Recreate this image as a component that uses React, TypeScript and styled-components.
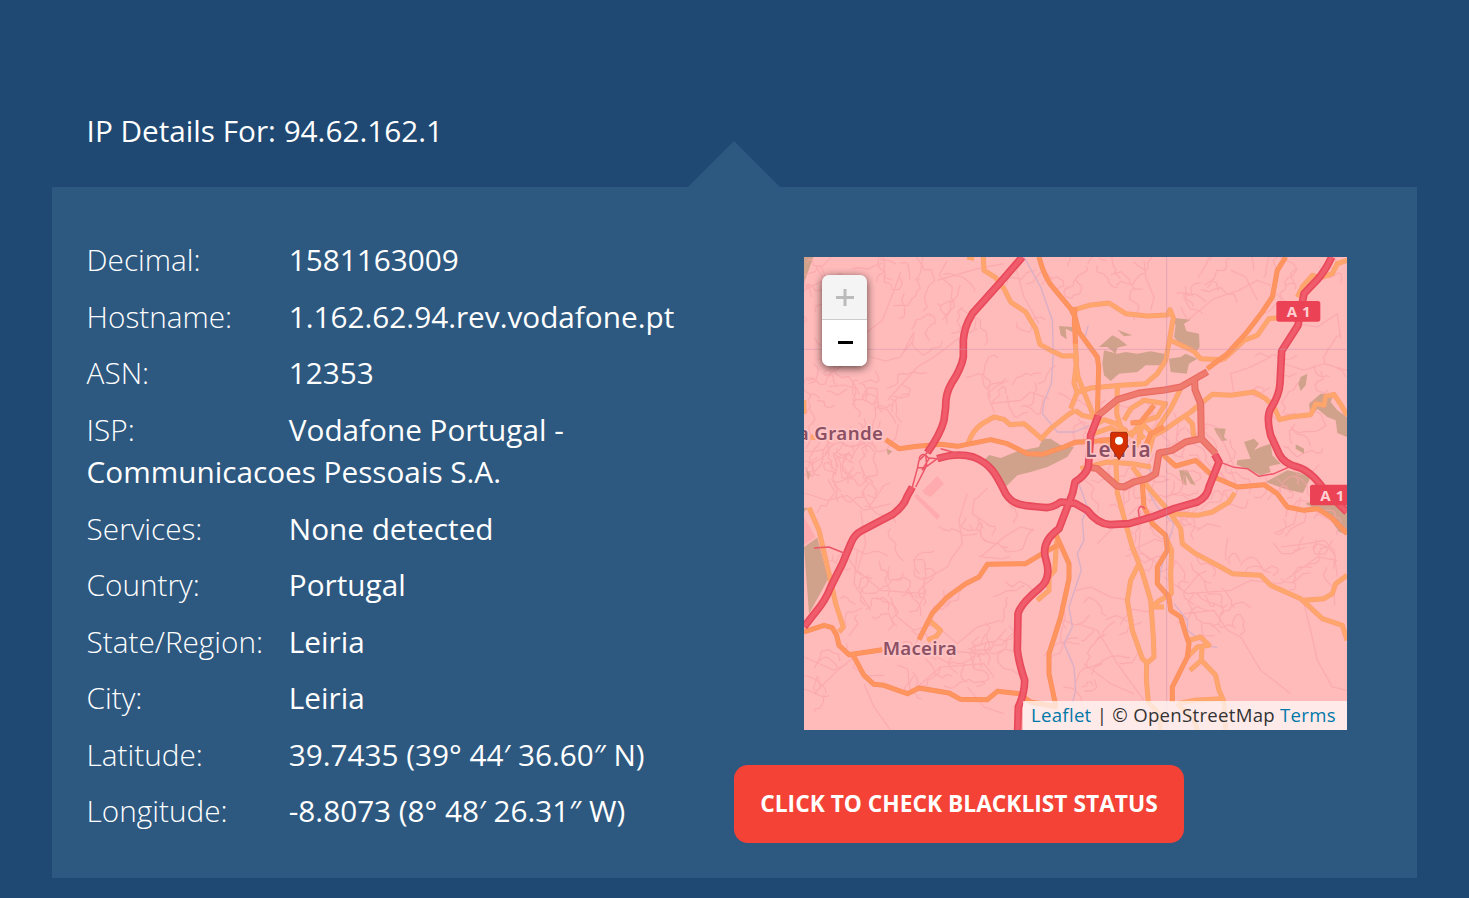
import React from "react";
import styled, { createGlobalStyle } from "styled-components";

const GlobalStyle = createGlobalStyle`
  html, body { margin: 0; padding: 0; }
  body {
    background: #1f4872;
    color: #fff;
    font-family: "Open Sans", "Noto Sans", sans-serif;
    font-size: 30px;
    line-height: 42.4px;
    overflow: hidden;
  }
`;

const Page = styled.main`
  box-sizing: border-box;
  height: 898px;
  padding: 110px 52px 0;
`;

const Heading = styled.h1`
  margin: 0;
  padding: 0 34.6px;
  height: 77px;
  font-size: 29.72px;
  font-weight: 400;
  line-height: 42px;
`;

const Panel = styled.section`
  position: relative;
  box-sizing: border-box;
  display: grid;
  grid-template-columns: 682px 1fr;
  height: 691px;
  background: #2d587f;

  &::before {
    content: "";
    position: absolute;
    left: 636px;
    top: -46px;
    border: 46px solid transparent;
    border-top-width: 0;
    border-bottom-color: #2d587f;
  }
`;

const Details = styled.div`
  display: flex;
  flex-direction: column;
  gap: 14.15px;
  padding: 52px 34.6px 0;
`;

const Row = styled.div`
  font-size: 29.72px;
`;

const Label = styled.span`
  display: inline-block;
  width: 202.2px;
  font-weight: 300;
`;

const Side = styled.div`
  display: flex;
  flex-direction: column;
  align-items: flex-start;
  gap: 35px;
  padding-top: 70px;
`;

const MapBox = styled.div`
  position: relative;
  width: 543px;
  height: 473px;
  margin-left: 70px;
  overflow: hidden;
  background: #ffbaba;
`;

const MapDrawing = styled.svg`
  display: block;
  width: 543px;
  height: 473px;
`;

const ZoomControl = styled.div`
  position: absolute;
  left: 18px;
  top: 18px;
  width: 45px;
  border-radius: 7px;
  overflow: hidden;
  box-shadow: 0 2px 9px rgba(0, 0, 0, 0.65);
`;

const ZoomButton = styled.button<{ $off?: boolean }>`
  display: flex;
  align-items: center;
  justify-content: center;
  box-sizing: border-box;
  width: 45px;
  height: ${(p) => (p.$off ? 45 : 46)}px;
  padding: ${(p) => (p.$off ? "0 0 0 1px" : "0 0 2px 2px")};
  border: 0;
  border-bottom: ${(p) => (p.$off ? "1px solid #ccc" : "0")};
  background: ${(p) => (p.$off ? "#f4f4f4" : "#fff")};
`;

const Attribution = styled.div`
  position: absolute;
  right: 0;
  bottom: 0;
  box-sizing: border-box;
  width: 324px;
  height: 29px;
  padding: 0 8px;
  background: rgba(255, 255, 255, 0.7);
  color: #333;
  font-size: 18.6px;
  letter-spacing: 0.29px;
  line-height: 28px;
  white-space: nowrap;
`;

const MapLink = styled.a`
  color: #0078a8;
`;

const CheckButton = styled.button`
  width: 450px;
  height: 78px;
  padding: 0;
  border: 0;
  border-radius: 14px;
  background: #f44336;
  color: #fff;
  font: 700 22.76px/78px "Open Sans", sans-serif;
  white-space: nowrap;
`;

const details: [string, string][] = [
  ["Decimal:", "1581163009"],
  ["Hostname:", "1.162.62.94.rev.vodafone.pt"],
  ["ASN:", "12353"],
  ["ISP:", "Vodafone Portugal - Communicacoes Pessoais S.A."],
  ["Services:", "None detected"],
  ["Country:", "Portugal"],
  ["State/Region:", "Leiria"],
  ["City:", "Leiria"],
  ["Latitude:", "39.7435 (39° 44′ 36.60″ N)"],
  ["Longitude:", "-8.8073 (8° 48′ 26.31″ W)"],
];

// Small streets: short wandering lines seeded around the built-up areas.
function streets(): string {
  let s = 41;
  const rnd = () => {
    s = (s * 16807) % 2147483647;
    return s / 2147483647;
  };
  const areas = [
    [60, 130, 110, 120, 18], [80, 450, 100, 150, 30], [100, 640, 130, 80, 24],
    [310, 60, 110, 60, 12], [450, 190, 90, 70, 9], [230, 440, 70, 70, 12],
    [630, 430, 90, 60, 9], [250, 980, 150, 100, 24], [420, 1230, 150, 80, 18],
    [80, 1270, 80, 60, 9], [590, 850, 90, 60, 9], [990, 560, 170, 110, 28],
    [1060, 60, 200, 60, 15], [1450, 60, 140, 60, 9], [1500, 860, 110, 100, 15],
    [860, 1180, 90, 120, 18], [1190, 960, 90, 60, 9], [1100, 840, 140, 110, 16],
    [1290, 1080, 100, 60, 9], [1490, 390, 110, 120, 12], [1160, 700, 120, 80, 12],
    [500, 1100, 150, 130, 12], [740, 100, 120, 90, 8], [1330, 620, 160, 110, 12],
  ];
  let d = "";
  for (const [cx, cy, rx, ry, n] of areas) {
    for (let i = 0; i < n; i++) {
      let x = cx + (rnd() * 2 - 1) * rx;
      let y = cy + (rnd() * 2 - 1) * ry;
      let a = rnd() * 6.283;
      d += `M${x.toFixed(0)} ${y.toFixed(0)}`;
      const steps = 4 + Math.floor(rnd() * 5);
      for (let k = 0; k < steps; k++) {
        a += (rnd() - 0.5) * 2.6;
        const l = 8 + rnd() * 20;
        x += Math.cos(a) * l;
        y += Math.sin(a) * l;
        d += `L${x.toFixed(0)} ${y.toFixed(0)}`;
      }
    }
  }
  return d;
}

const streetPath = streets();

const lanes =
  "M0 100L60 70L120 95L175 110 M80 350L150 300L190 225L235 190L270 100L290 45 M200 300L245 312L290 300L330 225L326 255L295 290 M250 430L340 330L390 300L470 240L520 215 M430 10L405 55L445 90L438 160L415 190 M400 70L520 35L600 20 M550 410L580 385L615 370 M560 440L550 410 M560 440L650 430L680 405L735 425 M630 15L660 120L705 200 M1020 10L1025 60L1050 120L1040 160 M1130 150L1150 190L1175 170L1230 125L1305 100L1360 70L1400 85 M1360 130L1325 60L1280 40 M1400 300L1340 330L1280 350L1290 410 M1440 320L1500 340L1560 320L1629 340 M1480 200L1540 210L1600 170L1610 245 M1240 520L1270 580L1290 630 M0 708L70 730L130 715L180 760L260 740 M170 760L185 860L160 940L230 1000L360 1010L360 960 M490 710L465 790L475 860L445 900L430 930L360 970 M530 900L600 840L650 810L690 820 M260 1020L280 1080L330 1120L390 1100L460 1160L520 1110L590 1090 M160 880L150 980L200 1060 M340 1290L410 1230L540 1220L570 1260 M30 1310L90 1250L150 1200 M0 1200L90 1240L130 1220 M180 1280L210 1350L260 1419 M490 1290L540 1350L600 1370 M815 1000L860 990L920 1020L980 1030 M820 1100L880 1120L940 1220L1020 1330 M840 1220L920 1280L990 1310 M880 860L940 800L990 830 M1010 760L1005 880L1060 920 M1080 960L1150 1010L1280 1000L1340 970L1430 980L1540 900L1600 910 M1140 1070L1230 1060L1270 1120L1310 1140L1370 1240L1460 1310 M1500 1040L1520 1120L1540 1210L1585 1290L1629 1300 M1410 830L1470 800L1490 720 M1430 870L1510 860L1560 850L1590 880L1600 960 M1180 820L1210 800L1250 810";

const tertiary = [
  "M538 0L540 40L575 62L600 95L620 135L665 165L695 215L708 262L740 280L775 297L813 296",
  "M493 558Q505 520 535 500L570 480L600 487L618 503L660 500L690 525L712 545L740 515L790 475L813 460",
  "M813 158L855 145L915 138L965 170L1030 177L1090 174L1098 158L1108 182L1098 240L1085 310L1060 350L1025 380L950 385L860 393L813 408",
  "M1100 250L1170 283L1190 305L1258 308",
  "M1258 308L1320 250L1360 235L1395 185L1430 182",
  "M1190 440L1225 412L1280 415L1350 405L1385 425L1410 450L1427 488L1460 480L1520 473L1535 440L1560 445L1565 418L1590 412L1612 445L1629 475",
  "M813 296L822 360L850 430L870 480", "M813 460L835 475L880 485",
  "M813 250L818 310L810 380L820 405L800 455",
  "M1480 120L1495 90L1525 55L1550 62L1585 50L1600 20L1629 10",
  "M940 390L938 470L950 510L960 550",
  "M1130 395L1100 455L1070 500L1050 530L1030 600",
  "M960 490L980 455L1020 430L1085 440L1060 480L1010 495L980 540",
  "M1190 440L1160 465L1115 495L1080 520L1050 535L1015 500L1000 570",
  "M1145 480L1165 500L1170 545", "M880 500L900 488L935 500L965 520L950 570L890 560",
  "M870 530L920 512L960 535L1000 520L1020 545", "M830 635L910 615L985 620L1040 630",
  "M935 600L940 708L965 800L985 870L1013 940L1040 1030L1048 1140L1050 1200L1030 1218L1015 1205L985 1120L970 1030L980 970L1005 920",
  "M985 630L1040 700L1080 745L1100 770L1130 815L1135 860L1175 890L1250 930L1285 950L1370 955L1400 985L1490 1025L1555 1085L1615 1105L1629 1150",
  "M1500 1030L1560 1025L1585 1010L1595 980L1629 955",
  "M1100 770L1180 775L1225 765L1275 735L1292 708",
  "M1028 1210L1027 1270L1033 1335L1065 1370L1070 1419",
  "M1085 840L1103 880L1100 950L1102 1010L1060 1035L1045 1050L1080 1050",
  "M1155 1150L1190 1140L1215 1165L1180 1170L1150 1200",
  "M1194 1170L1192 1210L1158 1240 M1192 1210L1235 1255L1245 1300L1260 1335L1265 1419",
  "M1120 1340L1170 1330L1255 1325 M1120 1340L1170 1390L1180 1419",
  "M15 752L45 820L75 950L95 1040L118 1110L105 1125",
  "M378 1092L410 1120L398 1137L370 1150",
  "M758 850L752 940L735 960L735 1000L700 1030",
  "M0 430L0 470 M20 540L80 545 M490 0L510 4",
];

const secondary = [
  "M245 548L285 575L340 568L410 562L460 568L560 548L610 560L670 590L715 592L780 570L813 556L880 552L940 545",
  "M705 0Q722 65 750 95L800 155L813 180L825 225L880 300L884 330L880 480",
  "M813 150L811 200L815 260",
  "M1445 0L1420 40L1405 120L1375 165L1325 230L1270 290L1210 335",
  "M1065 580L1090 605L1115 627L1175 610L1230 660L1300 690L1380 683L1420 710L1450 750L1500 760L1540 755L1580 780L1629 830",
  "M0 1125L60 1105L85 1112L98 1135L105 1165L135 1193L235 1178 M145 1190L180 1255L210 1282L240 1285L310 1310L345 1293L435 1308L470 1327L550 1328L580 1303L645 1310L680 1335L760 1350",
  "M345 1148L385 1068L430 1020L485 980L525 960L550 922L665 920L715 890L760 865",
  "M750 820L795 920L795 965L770 1080L735 1190L735 1250L755 1345",
  "M1015 680L1020 750L1045 800L1085 835L1090 880L1060 930L1060 980L1095 1020L1100 1060L1130 1080L1145 1130L1155 1160L1150 1200L1125 1250L1105 1290L1105 1335",
  "M980 498L1010 495L1050 445 M1015 590L1040 530L1080 510",
];

const trunk =
  "M883 475L940 428L1005 408L1075 400L1130 390L1210 344 M1172 373L1173 398L1190 440L1192 545L1235 590 M1192 545L1145 555L1105 580L1065 588L1055 650L1030 665L990 675L960 690L940 688L880 635L850 630";

const motorway =
  "M655 0L590 75L505 170Q480 210 478 250L478 300Q472 335 442 380Q424 410 425 450L420 490Q410 530 370 587 M325 690L310 717Q300 748 265 773L175 820Q150 832 140 860L115 920L80 990Q65 1030 35 1065L0 1110 M400 605Q460 586 508 600C565 622 580 660 605 710C630 750 665 745 728 752Q750 750 770 735L813 739L850 760Q880 800 918 803L975 800L1050 778L1110 755L1180 735Q1210 720 1215 690L1245 615L1232 592 M883 475L860 535L853 630Q845 655 813 675L806 708L765 815Q710 855 725 905Q745 965 705 995Q650 1040 642 1070L640 1180Q645 1220 662 1270Q662 1310 643 1350L641 1419 M1583 0Q1565 40 1540 68L1500 110L1482 205L1433 282L1428 380Q1426 415 1400 455Q1386 480 1400 535L1425 590Q1440 620 1480 630Q1520 640 1562 700L1629 765";

const MapArt = () => (
  <MapDrawing viewBox="0 0 1629 1419" fill="none" strokeLinejoin="round" strokeLinecap="butt">
    <g fill="#d1a28b">
      <path d="M0 0H28L0 78Z M0 870L40 842L73 965L15 1070Z M0 752L12 752L0 765Z" />
      <path d="M540 610L555 594L590 603L640 583L705 570L715 545L740 545L770 565L810 570L790 600L730 630L680 645L640 655L605 690L580 650Z" />
      <path d="M900 280L940 290L965 285L1000 290L1040 283L1095 293L1075 325L1025 325L1000 345L945 350L920 372L900 355L895 320Z M925 235L945 245L970 265L940 272L935 290L910 270L885 270Z M940 218L985 235L960 238Z" />
      <path d="M1105 182L1160 188L1140 200L1147 222L1185 230L1187 270L1170 290L1135 270L1110 240L1115 205Z M1095 305L1130 300L1145 290L1180 305L1155 320L1148 350L1100 345Z" />
      <path d="M1230 513L1265 515L1260 540L1270 550L1253 553L1238 530Z M1320 555L1350 545L1365 560L1350 580L1370 570L1400 560L1405 595L1430 620L1395 628L1400 645L1370 655L1340 640L1298 623L1300 610L1340 605Z M1385 675L1450 640L1500 650L1520 660L1497 708L1450 698Z" />
      <path d="M1490 360L1510 350L1505 385L1490 402L1483 380Z M1515 440L1550 410L1590 410L1580 435L1600 460L1629 480V540L1600 528L1595 490L1570 480L1540 455L1520 480Z M1475 562L1500 575L1500 590L1475 575Z M1505 740L1530 730L1629 730V832L1605 825L1575 780Z" />
      <path d="M765 207L805 210V225L785 215L788 247L770 235Z M247 575L265 583L252 595Z M1125 640L1150 640L1175 685L1160 680L1145 655L1148 685L1135 680Z M5 635L20 650L12 670Z" />
    </g>
    <path d="M355 702L400 657L420 680L380 720L362 712Z M330 718L338 710L408 776L400 788Z M0 780L35 840L0 865Z" fill="#ffabae" />
    <path d={streetPath + lanes} stroke="#f9a3a9" strokeWidth="3.4" opacity=".66" />
    <g stroke="#d9afc6" strokeWidth="4">
      <path d="M660 0L710 90L745 190L748 290L742 380L720 435L715 470L740 500L760 525L813 525L855 505 M853 205L840 250" />
      <path d="M825 680L850 750L835 790L840 850L820 890L832 940L815 990L795 1050L805 1110L780 1160L810 1230L815 1300L805 1340 M1035 708L1060 750L1110 800L1095 850L1070 940L1065 980 M1110 1040L1150 1090L1150 1120L1210 1165L1240 1172 M1010 620L1040 640L1035 665" />
    </g>
    <g stroke="#fd9e70" strokeWidth="15">
      {tertiary.map((d) => <path key={d} d={d} />)}
    </g>
    <g stroke="#ffa66d" strokeWidth="11">
      {tertiary.map((d) => <path key={d} d={d} />)}
    </g>
    <g stroke="#fb8c5c" strokeWidth="15">
      {secondary.map((d) => <path key={d} d={d} />)}
    </g>
    <g stroke="#ff955e" strokeWidth="11">
      {secondary.map((d) => <path key={d} d={d} />)}
    </g>
    <path d={trunk} stroke="#e96a62" strokeWidth="21" />
    <path d={trunk} stroke="#ef7b6e" strokeWidth="14" />
    <path d={motorway} stroke="#e84a5b" strokeWidth="23" />
    <path d={motorway} stroke="#f05c6b" strokeWidth="13" />
    <path d="M370 587L345 610L340 635L325 690 M365 590L368 625L335 690 M345 605Q355 580 375 605L355 638L400 605L375 603 M340 632L360 632 M410 575L465 590 M1250 616L1290 631L1330 635L1365 658L1410 650L1460 628 M1007 790L1003 760Q1008 740 1023 755 M30 873L75 870L120 888" stroke="#ed5668" strokeWidth="4.5" />
    <path d="M0 277H1629" stroke="#c892a8" strokeWidth="3" opacity=".45" />
    <path d="M1088 0V1419" stroke="#b88aa8" strokeWidth="2.4" opacity=".5" />
    <g fill="#ec4255">
      <rect x="1417" y="132" width="132" height="62" rx="8" />
      <rect x="1518" y="683" width="132" height="62" rx="8" />
    </g>
    <g fill="#ffd0d2" fontFamily="Noto Sans, sans-serif" fontWeight="700" fontSize="45">
      <text x="1448" y="180" textLength="72">A 1</text>
      <text x="1549" y="732" textLength="72">A 1</text>
    </g>
    <g fill="#8c5065" stroke="#ffc4c4" strokeWidth="10" paintOrder="stroke" fontFamily="Noto Sans, sans-serif" fontWeight="600" fontSize="56">
      <text x="-19" y="550" textLength="256">a Grande</text>
      <text x="236" y="1193" textLength="222">Maceira</text>
      <text x="844" y="601" fontSize="62" textLength="196">Leiria</text>
    </g>
    <path d="M922 526H967L970 530V570L945 608L920 570V530Z" fill="#d63000" stroke="#a82a10" strokeWidth="3" />
    <circle cx="945" cy="551" r="12" fill="#fff" />
  </MapDrawing>
);

export default function App() {
  return (
    <>
      <GlobalStyle />
      <Page>
        <Heading>IP Details For: 94.62.162.1</Heading>
        <Panel>
          <Details>
            {details.map(([label, value]) => (
              <Row key={label}>
                <Label>{label}</Label>
                {value}
              </Row>
            ))}
          </Details>
          <Side>
            <MapBox>
              <MapArt />
              <ZoomControl>
                <ZoomButton $off aria-label="Zoom in">
                  <svg width="18" height="18" viewBox="0 0 18 18">
                    <path d="M0 9.5H18M9 1V18" stroke="#bbb" strokeWidth="3" />
                  </svg>
                </ZoomButton>
                <ZoomButton aria-label="Zoom out">
                  <svg width="15" height="3" viewBox="0 0 15 3">
                    <rect width="15" height="3" fill="#000" />
                  </svg>
                </ZoomButton>
              </ZoomControl>
              <Attribution>
                <MapLink>Leaflet</MapLink> | © OpenStreetMap <MapLink>Terms</MapLink>
              </Attribution>
            </MapBox>
            <CheckButton>CLICK TO CHECK BLACKLIST STATUS</CheckButton>
          </Side>
        </Panel>
      </Page>
    </>
  );
}
